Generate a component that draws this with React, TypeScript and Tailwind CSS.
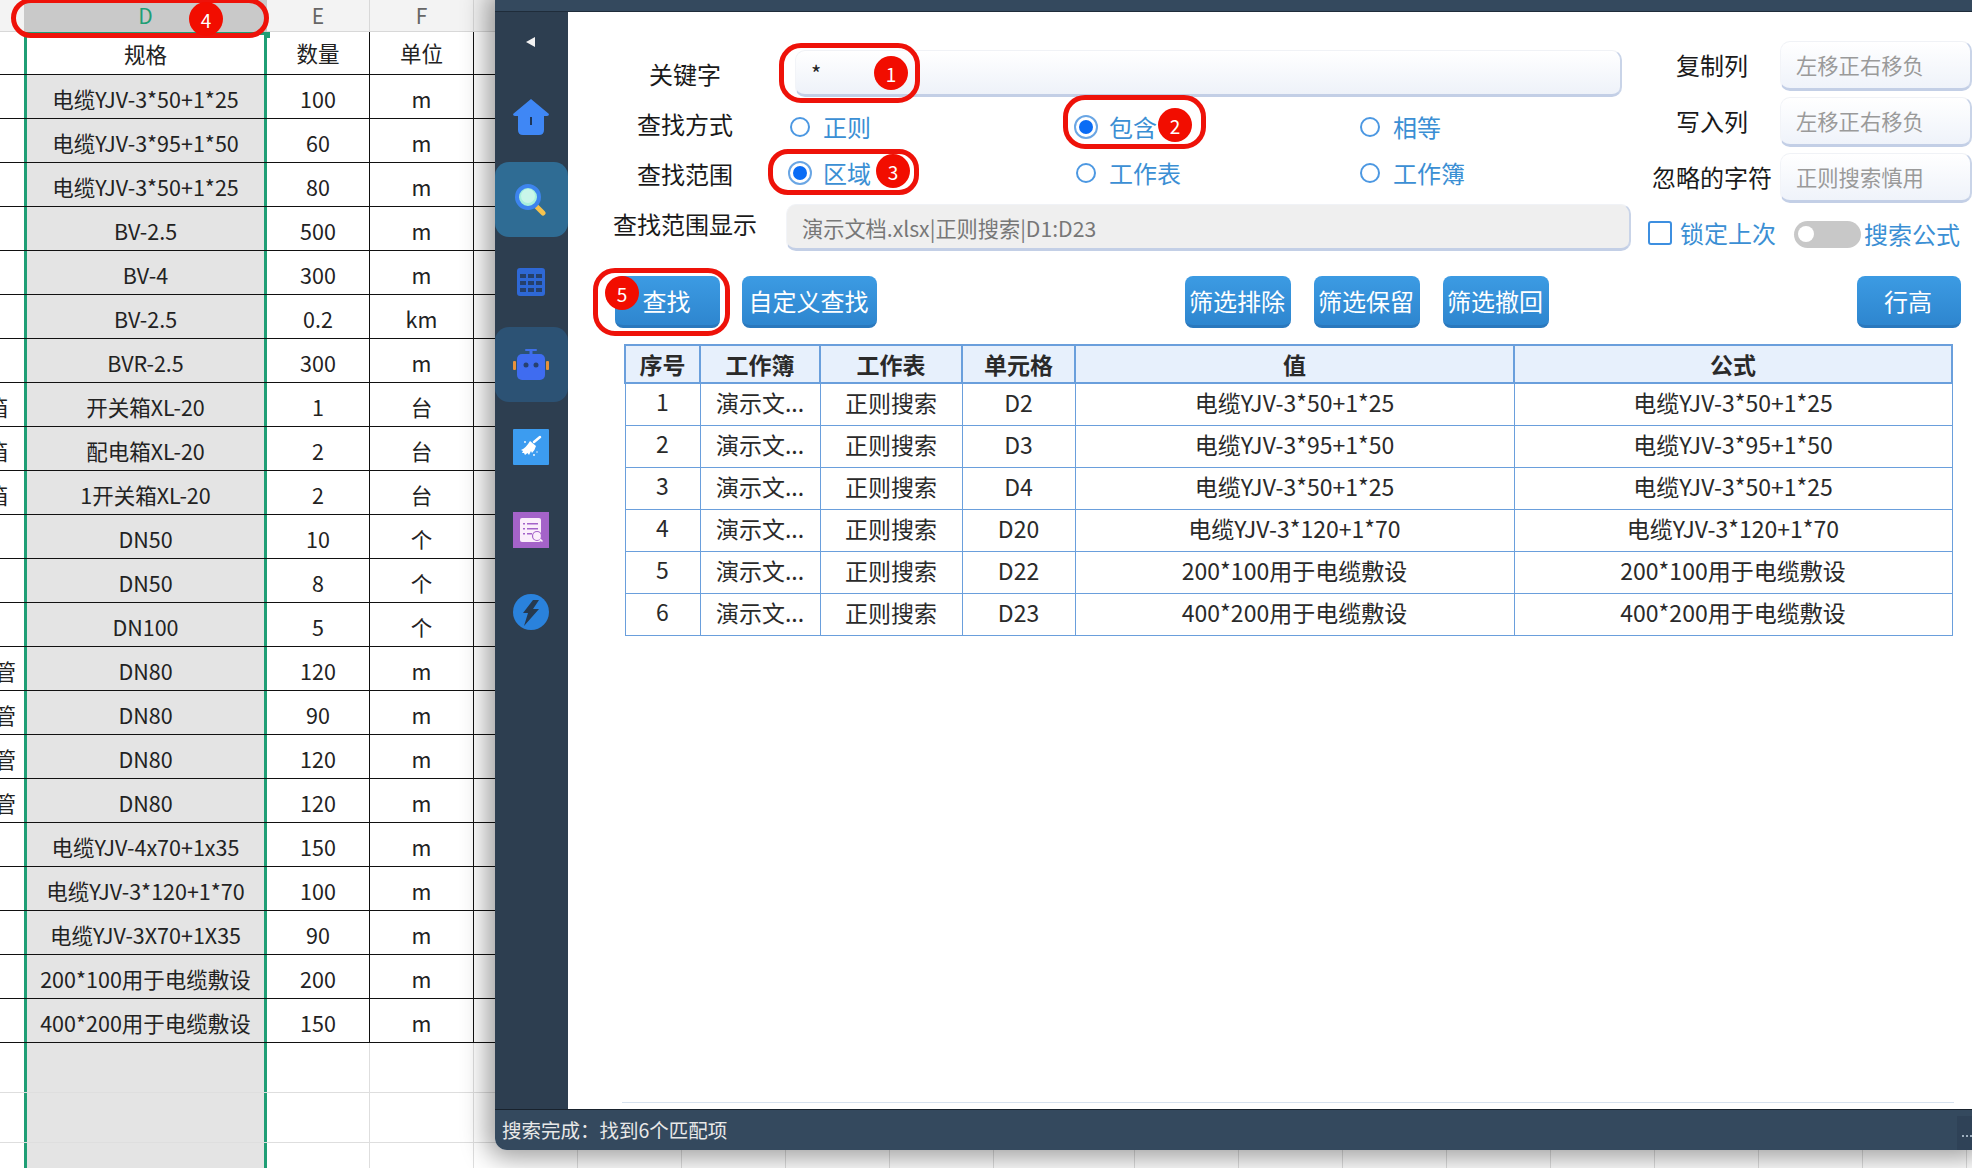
import React from "react";

const specs: [string, string, string, string][] = [
  ["", "电缆YJV-3*50+1*25", "100", "m"],
  ["", "电缆YJV-3*95+1*50", "60", "m"],
  ["", "电缆YJV-3*50+1*25", "80", "m"],
  ["", "BV-2.5", "500", "m"],
  ["", "BV-4", "300", "m"],
  ["", "BV-2.5", "0.2", "km"],
  ["", "BVR-2.5", "300", "m"],
  ["箱", "开关箱XL-20", "1", "台"],
  ["箱", "配电箱XL-20", "2", "台"],
  ["箱", "1开关箱XL-20", "2", "台"],
  ["", "DN50", "10", "个"],
  ["", "DN50", "8", "个"],
  ["", "DN100", "5", "个"],
  ["管", "DN80", "120", "m"],
  ["管", "DN80", "90", "m"],
  ["管", "DN80", "120", "m"],
  ["管", "DN80", "120", "m"],
  ["", "电缆YJV-4x70+1x35", "150", "m"],
  ["", "电缆YJV-3*120+1*70", "100", "m"],
  ["", "电缆YJV-3X70+1X35", "90", "m"],
  ["", "200*100用于电缆敷设", "200", "m"],
  ["", "400*200用于电缆敷设", "150", "m"],
];

const results: [string, string, string][] = [
  ["1", "D2", "电缆YJV-3*50+1*25"],
  ["2", "D3", "电缆YJV-3*95+1*50"],
  ["3", "D4", "电缆YJV-3*50+1*25"],
  ["4", "D20", "电缆YJV-3*120+1*70"],
  ["5", "D22", "200*100用于电缆敷设"],
  ["6", "D23", "400*200用于电缆敷设"],
];

const extra = Array.from({ length: 14 }, (_, i) => i);

function Sheet() {
  return (
    <div className="flex flex-col w-[1972px] text-[21.5px] text-[#222]">
      <div className="flex h-[32px] text-[21px]">
        <div className="w-[24px] bg-[#f3f3f3] border-b border-[#d8d8d8]" />
        <div className="w-[243px] bg-[#c9c9c9] text-[#1f9e75] flex items-center justify-center">D</div>
        <div className="w-[103px] bg-[#f3f3f3] text-[#666] flex items-center justify-center border-r border-b border-[#d8d8d8]">E</div>
        <div className="w-[104px] bg-[#f3f3f3] text-[#666] flex items-center justify-center border-r border-b border-[#d8d8d8]">F</div>
        <div className="flex-1 bg-[#f3f3f3] border-b border-[#d8d8d8]" />
      </div>
      <div className="flex h-[43px] border-b-[1.5px] border-[#111]">
        <div className="w-[24px]" />
        <div className="w-[243px] border-x-[3px] border-t-[3px] border-[#1f9e75] bg-white flex items-center justify-center">规格</div>
        <div className="w-[103px] border-r-[1.5px] border-[#111] flex items-center justify-center">数量</div>
        <div className="w-[104px] border-r-[1.5px] border-[#111] flex items-center justify-center">单位</div>
      </div>
      {specs.map((r, i) => (
        <div key={i} className="flex h-[44px] border-b-[1.5px] border-[#111]">
          <div className={`w-[24px] overflow-hidden flex items-center justify-end whitespace-nowrap pt-[5px] ${r[0] === "箱" ? "pr-[16px]" : "pr-[8px]"}`}>
            <span className="shrink-0">{r[0]}</span>
          </div>
          <div className="w-[243px] border-x-[3px] border-[#1f9e75] bg-[#e4e4e4] flex items-center justify-center whitespace-nowrap pt-[5px]">{r[1]}</div>
          <div className="w-[103px] border-r-[1.5px] border-[#111] flex items-center justify-center pt-[5px]">{r[2]}</div>
          <div className="w-[104px] border-r-[1.5px] border-[#111] flex items-center justify-center pt-[5px]">{r[3]}</div>
        </div>
      ))}
      {[0, 1, 2].map((i) => (
        <div key={i} className="flex h-[50px] border-b border-[#dedede]">
          <div className="w-[24px]" />
          <div className="w-[243px] border-x-[3px] border-[#1f9e75] bg-[#e4e4e4]" />
          <div className="w-[103px] border-r border-[#dedede]" />
          <div className="w-[104px] border-r border-[#dedede]" />
          {extra.map((c) => (
            <div key={c} className={`${c === 5 ? "w-[141px]" : "w-[104px]"} border-r border-[#dedede] shrink-0`} />
          ))}
        </div>
      ))}
    </div>
  );
}

function SideItem({ bg, children }: { bg?: string; children: React.ReactNode }) {
  return (
    <div className={`w-[73px] h-[75px] flex items-center justify-center pr-[1px] ${bg ?? ""}`}>{children}</div>
  );
}

function Sidebar() {
  return (
    <div className="w-[73px] shrink-0 bg-[#2d3e50] flex flex-col items-center">
      <div className="h-[67.5px] w-full flex justify-center pt-[25px] pr-[2px]">
        <svg width="9" height="10" viewBox="0 0 9 10"><path d="M9 0v10L0 5z" fill="#f2f2f2" /></svg>
      </div>
      <div className="flex flex-col gap-[7.5px]">
        <SideItem>
          <svg width="36" height="36" viewBox="0 0 36 36">
            <path d="M18 0 L36 15 Q36 17 34 17 H31 V31 Q31 36 26 36 H10 Q5 36 5 31 V17 H2 Q0 17 0 15 Z" fill="#3f87f5" />
            <rect x="17" y="18" width="2" height="8" fill="#1d3557" />
          </svg>
        </SideItem>
        <SideItem bg="bg-[#2f6c94] rounded-[14px]">
          <svg width="32" height="32" viewBox="0 0 32 32">
            <path d="M20 21 L28 29" stroke="#f6c24d" strokeWidth="5" strokeLinecap="round" />
            <circle cx="13" cy="13" r="11" fill="#a8f0dc" stroke="#3d84ee" strokeWidth="4" />
            <circle cx="13" cy="12" r="7" fill="#c9f6ea" />
          </svg>
        </SideItem>
        <SideItem>
          <svg width="28" height="28" viewBox="0 0 28 28">
            <rect width="28" height="28" rx="3" fill="#2e68d6" />
            <g fill="#25406b">
              <rect x="3" y="6" width="6" height="4" /><rect x="11" y="6" width="6" height="4" /><rect x="19" y="6" width="6" height="4" />
              <rect x="3" y="13" width="6" height="4" /><rect x="11" y="13" width="6" height="4" /><rect x="19" y="13" width="6" height="4" />
              <rect x="3" y="20" width="6" height="4" /><rect x="11" y="20" width="6" height="4" /><rect x="19" y="20" width="6" height="4" />
            </g>
          </svg>
        </SideItem>
        <SideItem bg="bg-[#2c5274] rounded-[14px]">
          <svg width="36" height="32" viewBox="0 0 36 32">
            <rect x="12" y="0" width="12" height="2" rx="1" fill="#3f6fe8" />
            <rect x="16.5" y="1" width="3" height="5" fill="#3f6fe8" />
            <rect x="4" y="5" width="28" height="26" rx="5" fill="#3f6cf0" />
            <rect x="0" y="12" width="3" height="9" rx="1" fill="#e8913a" />
            <rect x="33" y="12" width="3" height="9" rx="1" fill="#e8913a" />
            <circle cx="13" cy="16" r="2.5" fill="#27406f" />
            <circle cx="23" cy="16" r="2.5" fill="#27406f" />
          </svg>
        </SideItem>
        <SideItem>
          <svg width="36" height="36" viewBox="0 0 36 36">
            <rect width="36" height="36" rx="1" fill="#3c9cf0" />
            <path d="M21 13 L27 8" stroke="#fff" strokeWidth="2.5" strokeLinecap="round" />
            <path d="M17 12 L23 17 Q22 21 19 24 L18 22 L16 26 L14.5 24 L12 26 L11 24 L9 24 L10 22 L8 21 Q13 19 17 12Z" fill="#fff" />
            <circle cx="21" cy="26" r="0.9" fill="#fff" />
            <circle cx="12" cy="13" r="0.9" fill="#fff" />
            <circle cx="24" cy="23" r="0.7" fill="#fff" />
          </svg>
        </SideItem>
        <SideItem>
          <svg width="36" height="36" viewBox="0 0 36 36">
            <rect width="36" height="36" fill="#a463c9" />
            <rect x="7" y="6" width="21" height="24" rx="2" fill="#fbeefb" />
            <g fill="#a463c9">
              <rect x="10" y="11" width="2" height="1.5" /><rect x="14" y="11" width="11" height="1.5" />
              <rect x="10" y="16" width="2" height="1.5" /><rect x="14" y="16" width="11" height="1.5" />
              <rect x="10" y="21" width="2" height="1.5" /><rect x="14" y="21" width="5" height="1.5" />
            </g>
            <circle cx="24" cy="24" r="4.5" fill="#fbeefb" stroke="#a463c9" strokeWidth="1.2" />
            <path d="M27 27 L29.5 29.5" stroke="#fbeefb" strokeWidth="1.5" />
          </svg>
        </SideItem>
        <SideItem>
          <svg width="36" height="36" viewBox="0 0 36 36">
            <circle cx="18" cy="18" r="18" fill="#2a82dc" />
            <path d="M20 6 L26 6 L20 15 L26 15 L11 32 L15 19 L10 19 Z" fill="#26394f" />
          </svg>
        </SideItem>
      </div>
    </div>
  );
}

const inputBevel =
  "rounded-[10px] border-t border-l border-t-[#f0f2f6] border-l-[#f2f4f8] border-r-2 border-b-[3px] border-r-[#c9d4e8] border-b-[#c3cfe6]";

function Radio({ label, on, w }: { label: string; on?: boolean; w: string }) {
  return (
    <div className={`flex items-center ${w}`}>
      <div className="w-[20px] flex justify-center">
        {on ? (
          <span className="w-[24px] h-[24px] shrink-0 rounded-full border-[2.5px] border-[#6aa6e4] bg-white flex items-center justify-center">
            <span className="w-[14px] h-[14px] rounded-full bg-[#0a6cf5]" />
          </span>
        ) : (
          <span className="w-[20px] h-[20px] shrink-0 rounded-full border-[2.5px] border-[#4c98e2] bg-white" />
        )}
      </div>
      <span className="ml-[13px] text-[#3b8fd4] text-[24px] leading-none">{label}</span>
    </div>
  );
}

function Btn({ label, className }: { label: string; className: string }) {
  return (
    <button className={`h-[52px] rounded-[8px] pr-[2px] text-white text-[24px] leading-none bg-gradient-to-b from-[#3c9be3] to-[#2e86cf] border-b-[3px] border-[#2a78bd] whitespace-nowrap ${className}`}>
      {label}
    </button>
  );
}

function FieldRow({ label, hint }: { label: string; hint: string }) {
  return (
    <div className="flex h-[50px] items-center">
      <div className="w-[120px] ml-[9px] text-center text-[24px] text-[#1a1a1a] whitespace-nowrap pb-[2px]">{label}</div>
      <div className={`ml-[8px] w-[192px] h-[50px] flex items-center pl-[15px] text-[21.3px] text-[#9a9a9a] bg-gradient-to-b from-white to-[#eff3fa] ${inputBevel}`}>{hint}</div>
    </div>
  );
}

function MainPanel() {
  return (
    <div className="flex-1 bg-white flex flex-col">
      <div className="flex h-[264px]">
        <div className="w-[1075px] shrink-0 flex flex-col pt-[38px]">
          <div className="flex h-[47px] items-center">
            <div className="ml-[45px] w-[144px] text-center text-[24px] text-[#1a1a1a]">关键字</div>
            <div className={`ml-[38px] w-[827px] h-[47px] pl-[15px] flex items-center pb-[1px] text-[22px] text-[#222] bg-gradient-to-b from-white to-[#eef2f9] ${inputBevel}`}>*</div>
          </div>
          <div className="flex h-[53px] items-center">
            <div className="ml-[45px] w-[144px] text-center text-[24px] text-[#1a1a1a]">查找方式</div>
            <div className="ml-[33px] flex mt-[7px]">
              <Radio label="正则" w="w-[286px]" />
              <Radio label="包含" on w="w-[284px]" />
              <Radio label="相等" w="w-[120px]" />
            </div>
          </div>
          <div className="flex h-[54px] items-center">
            <div className="ml-[45px] w-[144px] text-center text-[24px] text-[#1a1a1a] pb-[6px]">查找范围</div>
            <div className="ml-[33px] flex mb-[8px]">
              <Radio label="区域" on w="w-[286px]" />
              <Radio label="工作表" w="w-[284px]" />
              <Radio label="工作簿" w="w-[120px]" />
            </div>
          </div>
          <div className="flex h-[47px] items-center">
            <div className="ml-[45px] w-[144px] text-center text-[24px] text-[#1a1a1a] whitespace-nowrap pb-[7px]">查找范围显示</div>
            <div className={`ml-[29px] w-[845px] h-[47px] pl-[15px] pt-[2px] flex items-center text-[21.2px] text-[#777] bg-[#efefef] ${inputBevel}`}>演示文档.xlsx|正则搜索|D1:D23</div>
          </div>
        </div>
        <div className="flex-1 flex flex-col pt-[29px]">
          <div className="flex flex-col gap-[6px]">
            <FieldRow label="复制列" hint="左移正右移负" />
            <FieldRow label="写入列" hint="左移正右移负" />
            <FieldRow label="忽略的字符" hint="正则搜索慎用" />
          </div>
          <div className="flex items-center h-[30px] mt-[16px]">
            <span className="ml-[5px] mb-[3px] w-[24px] h-[24px] rounded-[3px] border-2 border-[#3d8fe0] bg-white" />
            <span className="ml-[8px] mb-[3px] text-[24px] leading-none text-[#3b8fd4]">锁定上次</span>
            <span className="ml-[18px] w-[67px] h-[27px] rounded-full bg-[#c8c8c8] flex items-center pl-[4px]">
              <span className="w-[16px] h-[16px] rounded-full bg-white" />
            </span>
            <span className="ml-[3px] text-[24px] leading-none text-[#3b8fd4]">搜索公式</span>
          </div>
        </div>
      </div>

      <div className="flex ml-[47px]">
        <Btn label="查找" className="w-[105px]" />
        <Btn label="自定义查找" className="ml-[22px] w-[135px]" />
        <Btn label="筛选排除" className="ml-[308px] w-[106px]" />
        <Btn label="筛选保留" className="ml-[23px] w-[106px]" />
        <Btn label="筛选撤回" className="ml-[23px] w-[106px]" />
        <Btn label="行高" className="ml-[308px] w-[104px]" />
      </div>

      <table className="mt-[16px] ml-[56px] w-[1327px] table-fixed border-collapse text-[23px] text-[#2a2a2a] text-center">
        <colgroup>
          <col className="w-[75px]" />
          <col className="w-[120px]" />
          <col className="w-[142px]" />
          <col className="w-[113px]" />
          <col className="w-[439px]" />
          <col className="w-[438px]" />
        </colgroup>
        <thead>
          <tr className="h-[38px] bg-[#e7f0fc] font-bold">
            {["序号", "工作簿", "工作表", "单元格", "值", "公式"].map((h) => (
              <th key={h} className="border-2 border-[#6a9fdc] p-0 font-bold leading-none">{h}</th>
            ))}
          </tr>
        </thead>
        <tbody>
          {results.map((r) => (
            <tr key={r[0]} className="h-[42px]">
              <td className="border-[1.5px] border-[#6a9fdc] p-0 leading-none pb-[6px]">{r[0]}</td>
              <td className="border-[1.5px] border-[#6a9fdc] p-0 leading-none pb-[3px]">演示文...</td>
              <td className="border-[1.5px] border-[#6a9fdc] p-0 leading-none pb-[3px]">正则搜索</td>
              <td className="border-[1.5px] border-[#6a9fdc] p-0 leading-none pb-[3px]">{r[1]}</td>
              <td className="border-[1.5px] border-[#6a9fdc] p-0 leading-none pb-[3px]">{r[2]}</td>
              <td className="border-[1.5px] border-[#6a9fdc] p-0 leading-none pb-[3px]">{r[2]}</td>
            </tr>
          ))}
        </tbody>
      </table>

      <div className="mt-auto mb-[6px] ml-[54px] w-[1332px] h-[1px] bg-[#d6e1ee]" />
    </div>
  );
}

function AppWindow() {
  return (
    <div className="absolute left-[495px] top-0 w-[1477px] h-[1150px] flex flex-col rounded-bl-[12px] overflow-hidden">
      <div className="h-[12px] shrink-0 bg-[#34495e] border-b border-[#1f2c3a]" />
      <div className="flex flex-1 min-h-0">
        <Sidebar />
        <MainPanel />
      </div>
      <div className="h-[41px] shrink-0 bg-[#34495e] border-t border-[#18222d] flex items-center pl-[7px] text-[19.5px] text-[#e8e8e8] whitespace-nowrap">
        <span className="flex-1">搜索完成：找到6个匹配项</span>
        <span className="w-[15px] h-[34px] self-end bg-[#2f4257] relative">
          <span className="absolute right-0 bottom-[5px] w-[10px] h-[10px] flex flex-wrap justify-end gap-[2px]">
            <span className="w-[2px] h-[2px] bg-[#9fb0c0]" />
            <span className="w-[2px] h-[2px] bg-[#9fb0c0]" />
            <span className="w-[2px] h-[2px] bg-[#9fb0c0]" />
          </span>
        </span>
      </div>
    </div>
  );
}

function Ring({ className }: { className: string }) {
  return <div className={`absolute border-[5px] border-[#ee1209] ${className}`} />;
}

function Badge({ n, className }: { n: number; className: string }) {
  return (
    <div className={`absolute w-[34px] h-[34px] rounded-full bg-[#f20d00] text-white text-[19px] leading-none flex items-center justify-center ${className}`}>{n}</div>
  );
}

export default function App() {
  return (
    <div className="relative w-[1972px] h-[1168px] overflow-hidden bg-white font-['Noto_Sans_CJK_SC','Noto_Sans',sans-serif]">
      <Sheet />
      <div className="absolute left-[264px] top-[32px] w-[6px] h-[6px] bg-[#1f9e75]" />
      <div className="absolute left-[495px] top-0 w-[1477px] h-[1150px] rounded-bl-[12px] shadow-[0_0_26px_8px_rgba(0,0,0,0.38)]" />
      <AppWindow />
      <Ring className="left-[11px] top-[-2px] w-[258px] h-[40px] rounded-[20px]" />
      <Ring className="left-[779px] top-[43px] w-[141px] h-[60px] rounded-[22px]" />
      <Ring className="left-[1063px] top-[95px] w-[143px] h-[54px] rounded-[22px]" />
      <Ring className="left-[768px] top-[149px] w-[151px] h-[46px] rounded-[20px]" />
      <Ring className="left-[593px] top-[268px] w-[137px] h-[68px] rounded-[22px]" />
      <Badge n={1} className="left-[874px] top-[56px]" />
      <Badge n={2} className="left-[1158px] top-[108px]" />
      <Badge n={3} className="left-[876px] top-[154px]" />
      <Badge n={4} className="left-[189px] top-[2px]" />
      <Badge n={5} className="left-[605px] top-[276px]" />
    </div>
  );
}
